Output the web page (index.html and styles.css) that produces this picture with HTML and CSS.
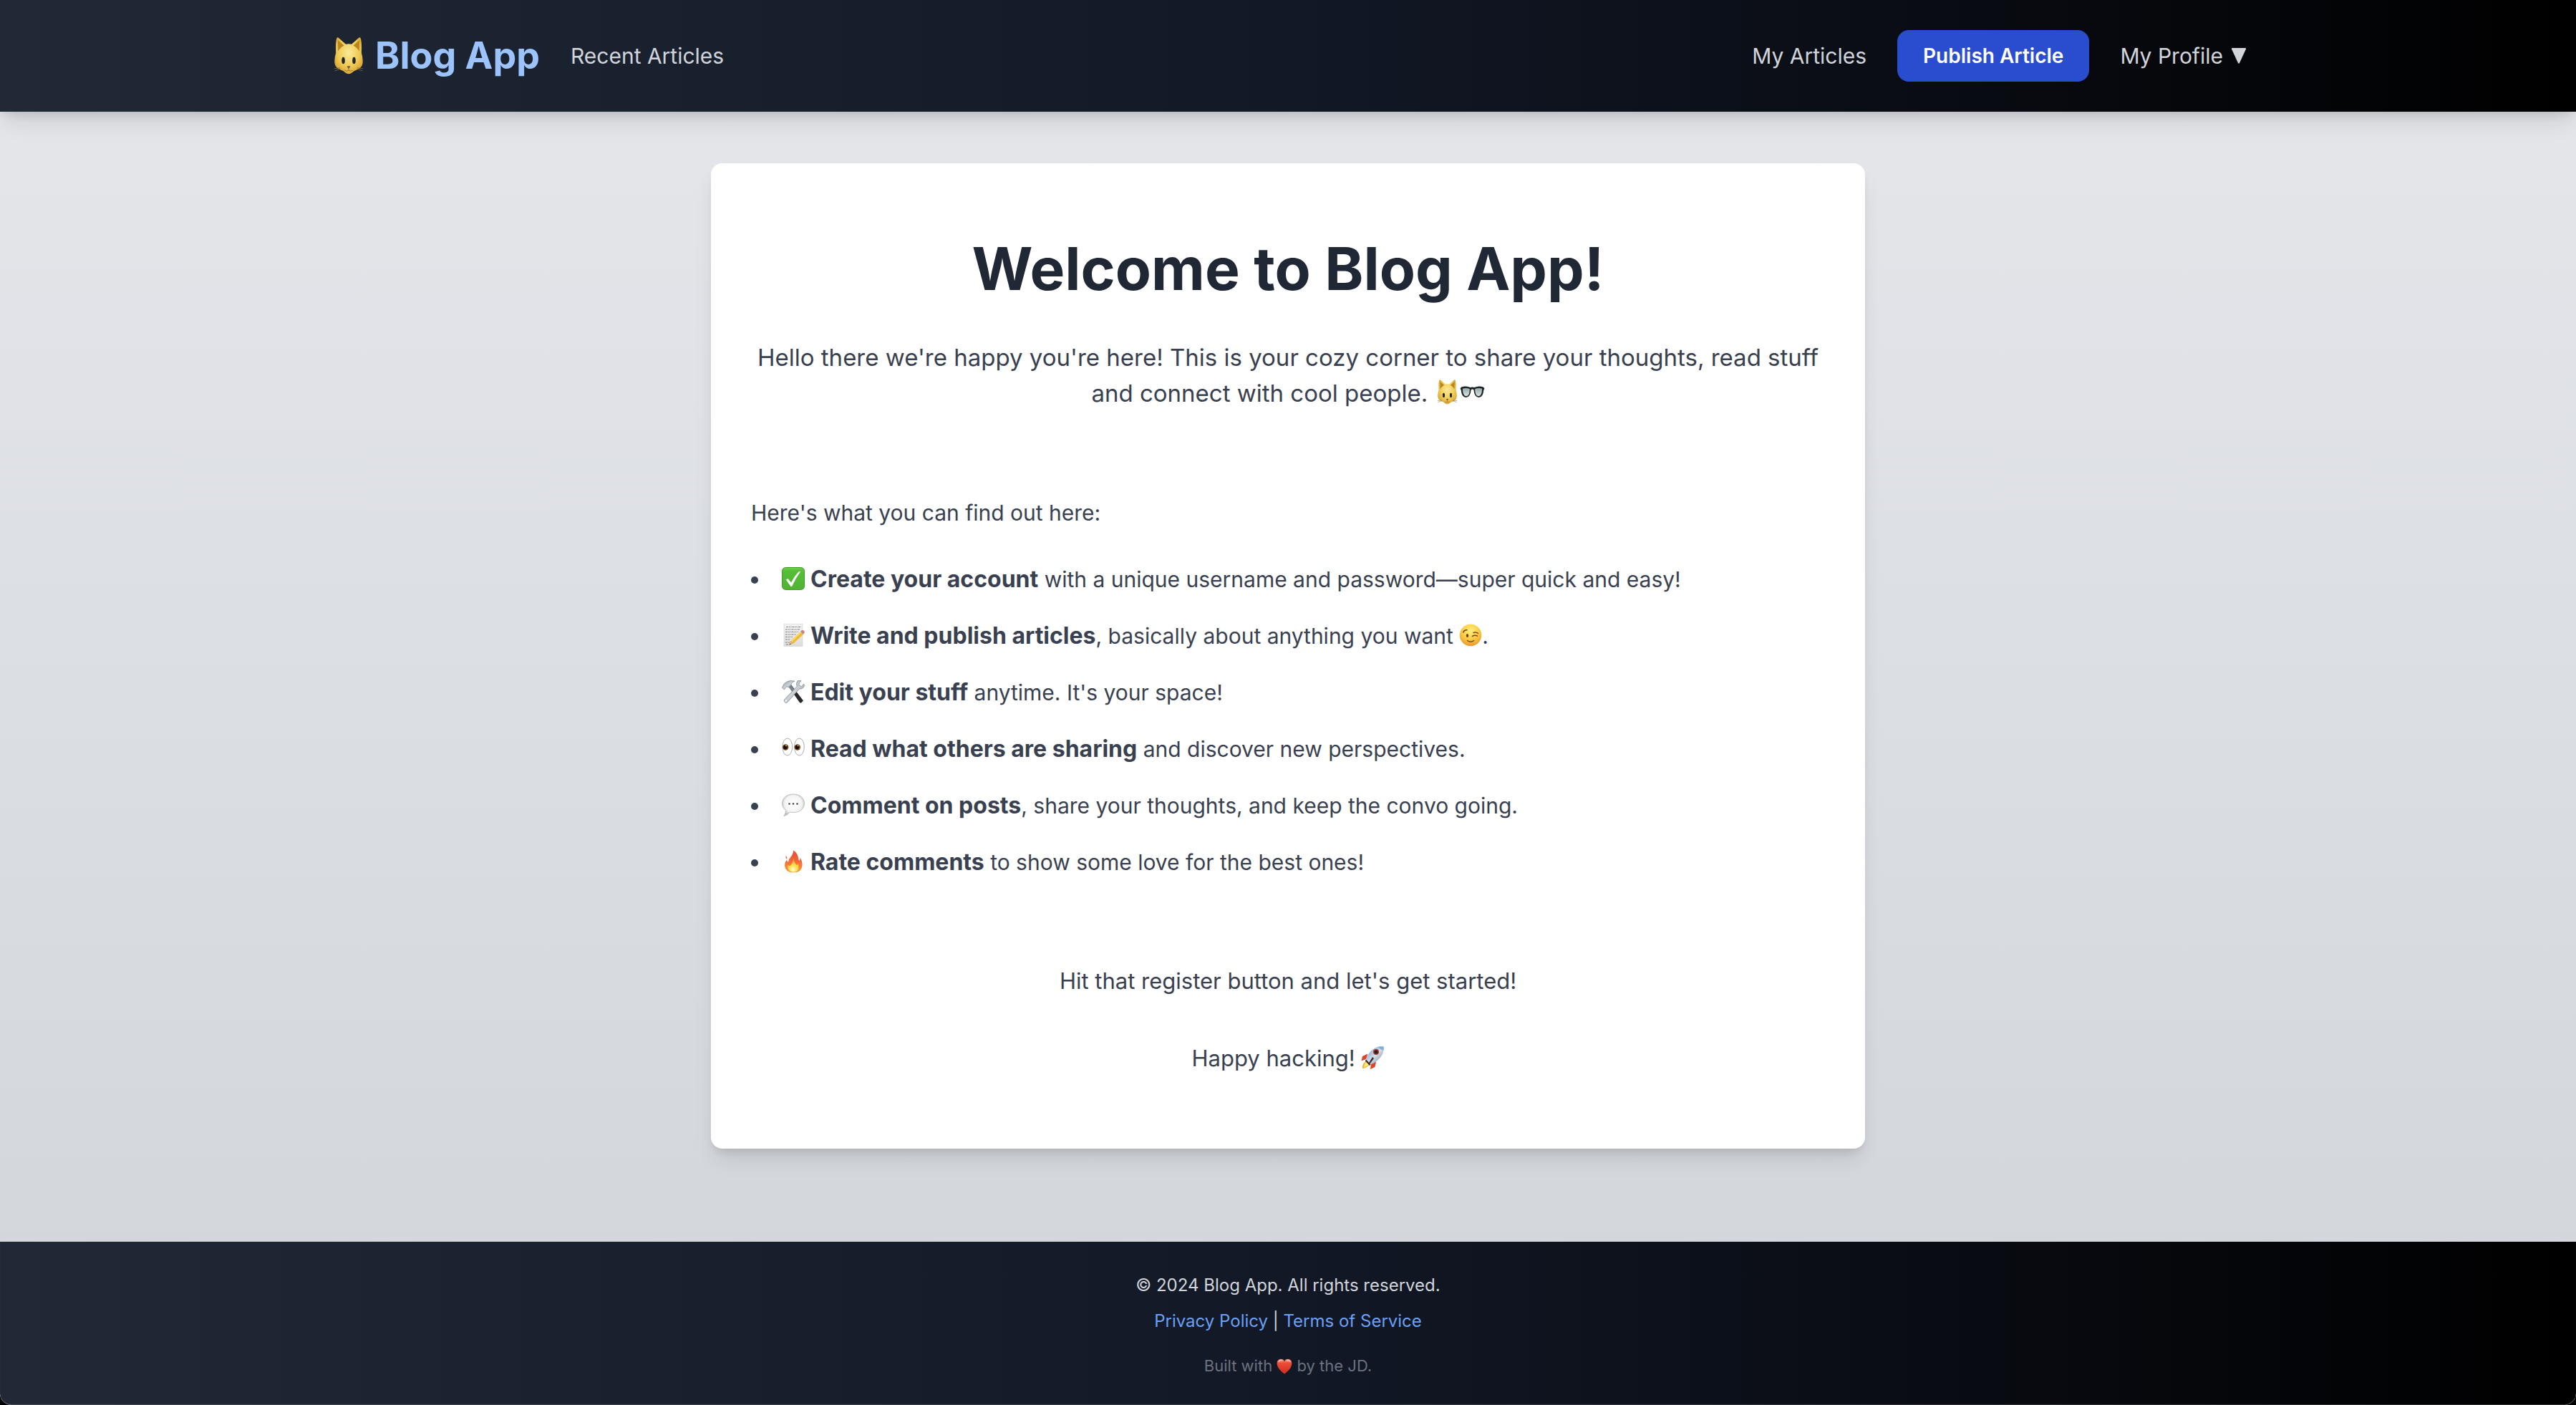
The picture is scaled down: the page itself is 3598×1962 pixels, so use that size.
FILE: index.html
```html
<!DOCTYPE html>
<html lang="en">
<head>
<meta charset="utf-8">
<meta name="viewport" content="width=device-width, initial-scale=1">
<title>Blog App</title>
<link rel="stylesheet" href="styles.css">
</head>
<body>
<svg class="sprite" aria-hidden="true">
  <defs>
    <radialGradient id="fur" cx="50%" cy="42%" r="62%"><stop offset="0" stop-color="#fbea9a"/><stop offset=".6" stop-color="#efcb55"/><stop offset="1" stop-color="#d7a033"/></radialGradient>
    <linearGradient id="green" x1="0" y1="0" x2="0" y2="1"><stop offset="0" stop-color="#6fcf4c"/><stop offset=".15" stop-color="#55bf38"/><stop offset="1" stop-color="#51b233"/></linearGradient>
    <linearGradient id="paper" x1="0" y1="0" x2="0" y2="1"><stop offset="0" stop-color="#f4f4f4"/><stop offset="1" stop-color="#dcdcdc"/></linearGradient>
    <radialGradient id="face" cx="50%" cy="30%" r="72%"><stop offset="0" stop-color="#fff27c"/><stop offset=".55" stop-color="#fccb45"/><stop offset="1" stop-color="#e8962a"/></radialGradient>
    <linearGradient id="steel" x1="0" y1="0" x2="1" y2="1"><stop offset="0" stop-color="#8aa0b4"/><stop offset=".5" stop-color="#ccd2d8"/><stop offset="1" stop-color="#6b7078"/></linearGradient>
    <radialGradient id="bubble" cx="50%" cy="45%" r="55%"><stop offset="0" stop-color="#fff"/><stop offset=".7" stop-color="#f4f4f4"/><stop offset="1" stop-color="#c0c0c0"/></radialGradient>
    <linearGradient id="flame" x1="0" y1="0" x2="0" y2="1"><stop offset="0" stop-color="#e34a2c"/><stop offset=".5" stop-color="#f4683a"/><stop offset="1" stop-color="#f9a43c"/></linearGradient>
    <radialGradient id="core" cx="50%" cy="85%" r="75%"><stop offset="0" stop-color="#fffde0"/><stop offset=".5" stop-color="#fde14b"/><stop offset="1" stop-color="#fbab3b"/></radialGradient>
    <linearGradient id="heart" x1="0" y1="0" x2="0" y2="1"><stop offset="0" stop-color="#f58a74"/><stop offset=".3" stop-color="#ea4c38"/><stop offset="1" stop-color="#d42c1c"/></linearGradient>
    <linearGradient id="hull" x1="0" y1="0" x2="1" y2="1"><stop offset="0" stop-color="#4b8ad0"/><stop offset=".5" stop-color="#d5dfe8"/><stop offset="1" stop-color="#77828c"/></linearGradient>
    <linearGradient id="lens" x1="0" y1="0" x2="0" y2="1"><stop offset="0" stop-color="#93a8a8"/><stop offset="1" stop-color="#d7e6e4"/></linearGradient>
  </defs>
  <symbol id="cat" viewBox="0 0 32 32">
    <path d="M5 13.500Q4.500 4 5.800.6Q6.300-.2 7.300.5L13.500 6Q16 5.400 18.500 6L24.700.5Q25.700-.2 26.200.6Q27.500 4 27 13.500Q28.500 18 28 22.500Q27.500 27 20.500 29Q18 31.500 16 31.500Q14 31.500 11.500 29Q4.500 27 4 22.500Q3.500 18 5 13.500Z" fill="url(#fur)"/>
    <path d="M6.700 2.500L12 7Q8.500 9 6.900 12ZM25.300 2.500L20 7Q23.500 9 25.100 12Z" fill="#b9851f"/>
    <ellipse cx="11.400" cy="20" rx="1.400" ry="2.900" fill="#22252b"/><ellipse cx="20.600" cy="20" rx="1.400" ry="2.900" fill="#22252b"/>
    <path d="M14.500 25Q16 24.100 17.500 25L16 27.400Z" fill="#746044"/>
    <path d="M16 27.200V28.500M12.500 28.500Q15 29.600 16 28.300Q17 29.600 19.500 28.500M4 29L9 27M3.500 27L8.500 26.300M28 29L23 27M28.500 27L23.500 26.300" fill="none" stroke="#8c6b2f" stroke-width=".5"/>
  </symbol>
  <symbol id="glasses" viewBox="0 0 32 32">
    <path d="M2 9.500Q8 7.500 13.500 10Q16 9.300 18.500 10Q24 7.500 30 9.500L31.500 11.500L30.300 14Q30 22.500 24 22.800Q18.500 22.500 17.700 13Q16 11.800 14.300 13Q13.500 22.500 8 22.800Q2 22.500 1.700 14L.5 11.500Z" fill="#202326"/>
    <path d="M3.600 11.700Q8 10 12.700 12Q12.500 21 8.200 21.200Q3.500 21 3.600 11.700ZM28.400 11.700Q24 10 19.300 12Q19.500 21 23.800 21.200Q28.500 21 28.400 11.700Z" fill="url(#lens)"/>
  </symbol>
  <symbol id="check" viewBox="0 0 32 32">
    <rect x=".5" y=".5" width="31" height="31" rx="5" fill="url(#green)" stroke="#3f9d28"/>
    <path d="M5.800 17.500L8.500 16L13 21.500Q17 13 23.800 6H26.200Q19.500 15 14 27H12.500Z" fill="#fff"/>
  </symbol>
  <symbol id="memo" viewBox="0 0 32 32">
    <path d="M3 .5H29V31.500H3Z" fill="url(#paper)" stroke="#d2d2d2" stroke-width=".6"/>
    <path d="M6 4.500H26M5 8H25M5 11.500H23M5 15H20M5 18.500H15M5 22H12M5 26H11M6 29H10" stroke="#777" stroke-width=".9" stroke-dasharray="3 1 2 .8 1 .7"/>
    <path d="M10.500 29.500L12.500 24L26 11L30 15L16 27.800Z" fill="#f1bb36"/><path d="M12.500 24L26 11L27.200 12.200L13.800 25.400Z" fill="#f9db73"/>
    <path d="M10.500 29.500L12.500 24L16 27.800Z" fill="#d9b27d"/><path d="M10.500 29.500L11.300 27.500L12.500 28.700Z" fill="#333"/>
    <path d="M26 11L27.500 9.500L31 13.500L30 15Z" fill="#87a3ad"/><path d="M27 10Q29 8 31 10Q32.500 12 30.700 13.800Z" fill="#e5727a"/>
  </symbol>
  <symbol id="wink" viewBox="0 0 32 32">
    <circle cx="16" cy="16" r="15.200" fill="url(#face)"/>
    <ellipse cx="11.500" cy="16.500" rx="1.700" ry="2.500" fill="#6d4013"/>
    <path d="M5.800 12Q7 8.500 11 8.800M18.500 17.500Q22 15.300 25.500 17.200M20 12.500Q23.500 11 26.500 13.500M11.500 23.500Q16 27 20.500 23.500" fill="none" stroke="#7a4715" stroke-width="1.500" stroke-linecap="round"/>
  </symbol>
  <symbol id="tools" viewBox="0 0 32 32">
    <path d="M9 8L12.500 5.500L30 28.500L27 31.500Q25.500 32 24.500 30.500Z" fill="#27292d"/><path d="M9 8L12 5.500L19 15L16.500 18Z" fill="#7c8791"/>
    <path d="M1 9Q2 5 7 2Q12-.5 18 1.200Q13 2.500 13 6.500L9.500 10Q8 8.500 6 9.200L3.500 13L.5 10.500Z" fill="url(#steel)" stroke="#596270" stroke-width=".5"/>
    <path d="M22 .8Q19.500 4 21 8.500L3.500 27Q2.500 30 5 31.300Q7 32 8.500 30L24.500 12Q29 13 31.700 7.500L30.500 5L27.500 8.500L24 7L24.500 3.500L27 .8Q24-.3 22 .8Z" fill="url(#steel)" stroke="#596270" stroke-width=".5"/>
    <circle cx="6" cy="28.500" r="1.200" fill="#fff"/>
  </symbol>
  <symbol id="eyes" viewBox="0 0 32 32">
    <g fill="#fff" stroke="#8b8b8b" stroke-width=".7"><ellipse cx="7.800" cy="14" rx="6.900" ry="12"/><ellipse cx="24.400" cy="14" rx="6.900" ry="12"/></g>
    <circle cx="5.200" cy="14.500" r="4.200" fill="#7d4914"/><circle cx="21.800" cy="14.500" r="4.200" fill="#7d4914"/>
    <circle cx="4.900" cy="14.500" r="2.700" fill="#120c07"/><circle cx="21.500" cy="14.500" r="2.700" fill="#120c07"/><circle cx="6" cy="12.500" r=".8" fill="#fff"/><circle cx="22.600" cy="12.500" r=".8" fill="#fff"/>
  </symbol>
  <symbol id="speech" viewBox="0 0 32 32">
    <path d="M16 1C25 1 31.500 6.500 31.500 14S25 26.500 16 26.500Q13 26.500 11 26Q8 30.500 3 31.500Q5.500 28 5.500 23.500Q.5 20 .5 14C.5 6.500 7 1 16 1Z" fill="url(#bubble)" stroke="#b4b4b4" stroke-width=".8"/>
    <g fill="#444"><circle cx="10.500" cy="14.500" r="1.300"/><circle cx="16" cy="14.500" r="1.300"/><circle cx="21.500" cy="14.500" r="1.300"/></g>
  </symbol>
  <symbol id="fire" viewBox="0 0 32 32">
    <path d="M16 .5Q22 4 23 11Q23.300 14 24.500 15Q26 13.500 25.700 10.500Q29 16 28.500 22Q27.500 31.500 16.500 31.500Q5 31.500 4 22Q3.800 18 6.500 14Q8 16 9 17Q9.500 12.500 13 9Q16 5.500 16 .5ZM5.500 8Q8 9.500 7 13Q5 11.500 5.500 8Z" fill="url(#flame)"/>
    <path d="M16.500 12Q17 18 21 21Q22.500 21 23 18.500Q25.500 30.500 16.500 30.800Q7.500 30.500 8 20.500Q9.500 22 11.500 22Q15 19 16.500 12Z" fill="url(#core)"/>
  </symbol>
  <symbol id="rocket" viewBox="0 0 32 32">
    <path d="M9.500 10.500L2 14L.5 20.500L7 18ZM21 21.500L19.500 29L13 32L14 24Z" fill="#dd4529"/>
    <path d="M7.500 20Q1.500 24 2 31Q8.500 30.500 12.500 25Z" fill="#f8ae30"/><path d="M8 21.500Q4 25 4 29.500Q8.500 28.500 11 25Z" fill="#fff07c"/>
    <path d="M7 18.500Q10 8 19.500 2.500Q26-.5 31.500.5Q32.500 6 29.500 12Q24 21.500 13.500 25.500Z" fill="url(#hull)"/>
    <path d="M19.500 2.500Q26-.5 31.500.5Q32 3 31.500 6Q27 5 24 1.200Z" fill="#7db0df"/>
    <circle cx="21" cy="8" r="4" fill="#b93125"/><circle cx="21" cy="8" r="2.500" fill="#22242b"/>
    <path d="M7 18.500L13.500 25.500L12 27L5.800 20.500ZM16 15L18 17L12 25L10.500 24Z" fill="#3d2b2f"/>
  </symbol>
  <symbol id="love" viewBox="0 0 32 32">
    <path d="M16 31.500Q2.500 21.500 1 12Q0 2 8.500 1.200Q14 1 16 6Q18 1 23.500 1.200Q32 2 31 12Q29.500 21.500 16 31.500Z" fill="url(#heart)"/>
    <path d="M3 8Q4 3 8.500 2.800Q12 3 13.500 6Q8 3.500 3 8ZM29 8Q28 3 23.500 2.800Q20 3 18.500 6Q24 3.500 29 8Z" fill="#fbc0b3"/>
  </symbol>
</svg>

<header class="site-header">
  <nav class="bar" aria-label="Main">
    <div class="group">
      <a class="brand" href="#"><svg class="emoji" role="img" aria-label="Cat"><use href="#cat"/></svg>Blog App</a>
      <a class="nav-link" href="#">Recent Articles</a>
    </div>
    <div class="group">
      <a class="nav-link" href="#">My Articles</a>
      <button class="publish" type="button">Publish Article</button>
      <button class="nav-link profile" type="button">My Profile<svg class="caret" viewBox="0 0 20 22" aria-hidden="true"><path d="M1 0H19Q20.500 0 20 1.500L11 21Q10 22.500 9 21L0 1.500Q-.5 0 1 0Z" fill="currentColor"/></svg></button>
    </div>
  </nav>
</header>

<main class="content">
  <article class="card">
    <h1>Welcome to Blog App!</h1>
    <p class="lead">Hello there we're happy you're here! This is your cozy corner to share your thoughts, read stuff and connect with cool people. <svg class="emoji" role="img" aria-label="Cat"><use href="#cat"/></svg><svg class="emoji" role="img" aria-label="Glasses"><use href="#glasses"/></svg></p>
    <p class="intro">Here's what you can find out here:</p>
    <ul class="features">
      <li><svg class="emoji" aria-hidden="true"><use href="#check"/></svg><strong>Create your account</strong> with a unique username and password—super quick and easy!</li>
      <li><svg class="emoji" aria-hidden="true"><use href="#memo"/></svg><strong>Write and publish articles</strong>, basically about anything you want <svg class="emoji inline" role="img" aria-label="Wink"><use href="#wink"/></svg>.</li>
      <li><svg class="emoji" aria-hidden="true"><use href="#tools"/></svg><strong>Edit your stuff</strong> anytime. It's your space!</li>
      <li><svg class="emoji" aria-hidden="true"><use href="#eyes"/></svg><strong>Read what others are sharing</strong> and discover new perspectives.</li>
      <li><svg class="emoji" aria-hidden="true"><use href="#speech"/></svg><strong>Comment on posts</strong>, share your thoughts, and keep the convo going.</li>
      <li><svg class="emoji" aria-hidden="true"><use href="#fire"/></svg><strong>Rate comments</strong> to show some love for the best ones!</li>
    </ul>
    <p class="closing">Hit that register button and let's get started!</p>
    <p class="closing">Happy hacking! <svg class="emoji" role="img" aria-label="Rocket"><use href="#rocket"/></svg></p>
  </article>
</main>

<footer class="site-footer">
  <p>© 2024 Blog App. All rights reserved.</p>
  <p><a href="#">Privacy Policy</a> | <a href="#">Terms of Service</a></p>
  <p class="credit">Built with <svg class="emoji" role="img" aria-label="love"><use href="#love"/></svg> by the JD.</p>
</footer>
</body>
</html>
```
FILE: styles.css
```css
* { box-sizing: border-box; }
html { background: #000; }
body {
  margin: 0;
  min-height: 100vh;
  display: flex;
  flex-direction: column;
  font-family: Inter, "Liberation Sans", sans-serif;
  font-size: 30px;
  line-height: 48px;
  color: #394150;
  background: linear-gradient(to bottom, #e5e7eb, #d1d5db);
  border-radius: 0 0 16px 16px;
}
h1, p, ul { margin: 0; padding: 0; }
a { color: inherit; text-decoration: none; }
button { font: inherit; border: 0; background: none; padding: 0; cursor: pointer; }
.sprite { position: absolute; width: 0; height: 0; }
.emoji { width: 32px; height: 32px; vertical-align: -4px; }

.site-header {
  padding: 40px;
  color: #d1d5db;
  background: linear-gradient(to right, #212936, #121826, #000);
  box-shadow: 0 20px 30px -6px rgba(0, 0, 0, .1), 0 8px 12px -4px rgba(0, 0, 0, .1);
}
.bar { display: flex; justify-content: space-between; align-items: center; max-width: 2676px; margin: 0 auto; }
.group { display: flex; align-items: center; gap: 43px; }
.brand { display: flex; align-items: center; gap: 11px; font-size: 52px; line-height: 76px; font-weight: 700; color: #9cc3fb; }
.brand .emoji { width: 52px; height: 52px; }
.profile { display: flex; align-items: center; gap: 12px; color: #d1d5db; }
.caret { width: 20px; height: 22px; }
.publish {
  padding: 12px 36px;
  border-radius: 16px;
  background: #2a4dd0;
  color: #fff;
  font-size: 28px;
  font-weight: 600;
}

.content { flex: 1; padding: 72px 40px 128px; }
.card {
  max-width: 1612px;
  margin: 0 auto;
  padding: 96px 56px 102px;
  border-radius: 16px;
  background: #fff;
  box-shadow: 0 20px 30px -6px rgba(0, 0, 0, .1), 0 8px 12px -4px rgba(0, 0, 0, .1);
}
h1 { font-size: 82px; line-height: 104px; font-weight: 700; text-align: center; color: #202836; }
.lead { margin-top: 46px; font-size: 33px; line-height: 50px; text-align: center; }
.lead .emoji { width: 35px; height: 35px; }
.intro { margin-top: 118px; }
.features { margin-top: 45px; display: grid; gap: 31px; list-style: none; }
.features li::before {
  content: "";
  display: inline-block;
  width: 10px;
  height: 10px;
  margin-right: 33px;
  border-radius: 50%;
  background: currentColor;
  vertical-align: 5px;
}
.features strong { font-size: 32px; line-height: 1; }
.features .emoji { margin-right: 8px; }
.features .inline { margin-right: 0; }
.closing { margin-top: 60px; font-size: 31px; text-align: center; }
.features + .closing { margin-top: 118px; }

.site-footer {
  padding: 36px 40px 34px;
  text-align: center;
  font-size: 24px;
  line-height: 50px;
  color: #d1d5db;
  background: linear-gradient(to right, #212936, #121826, #000);
  border-radius: 0 0 16px 16px;
  box-shadow: inset 0 -1px 1px rgba(255, 255, 255, .2);
}
.site-footer a { color: #6ba1f4; }
.credit { margin-top: 16px; font-size: 22px; line-height: 42px; color: #6b7280; }
.credit .emoji { width: 22px; height: 22px; }
```
